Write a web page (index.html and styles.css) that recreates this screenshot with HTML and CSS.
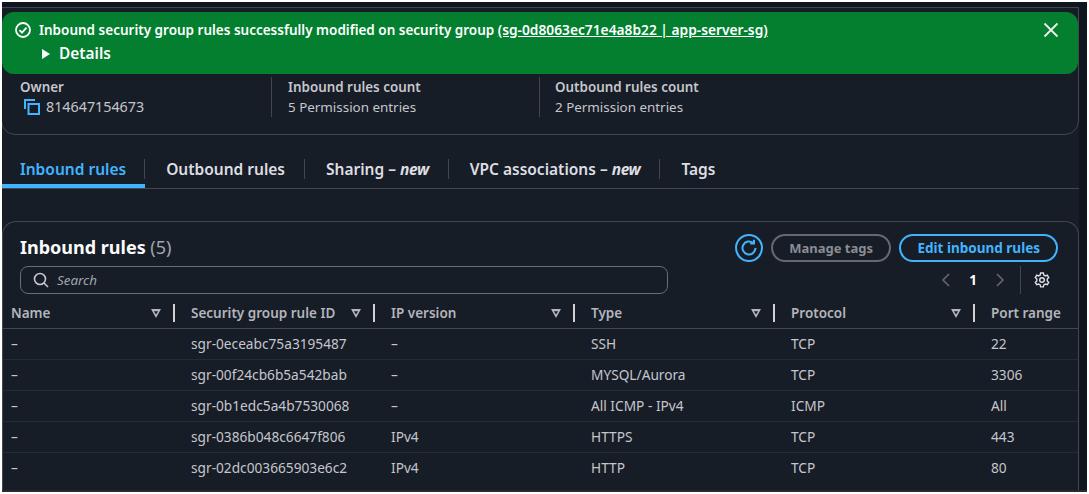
FILE: index.html
```html
<!DOCTYPE html>
<html lang="en">
<head>
    <meta charset="UTF-8">
    <title>Inbound rules</title>
    <link rel="stylesheet" href="styles.css">
</head>
<body>
    <div class="page">
        <div class="flash">
            <svg class="flash-icon" width="16" height="16" viewBox="0 0 16 16"><circle cx="8" cy="8" r="7"/><path d="M4.500 8.200 7 10.700l4.500-5"/></svg>
            <div class="flash-text">
                <div>Inbound security group rules successfully modified on security group <a href="#">(sg-0d8063ec71e4a8b22 | app-server-sg)</a></div>
                <div class="details"><span class="caret"></span>Details</div>
            </div>
            <svg class="flash-close" width="16" height="16" viewBox="0 0 16 16"><path d="M1.500 1.500l13 13M14.500 1.500l-13 13"/></svg>
        </div>

        <div class="main">
            <div class="summary">
                <div class="summary-col first">
                    <div class="label">Owner</div>
                    <div class="value"><svg class="copy" width="16" height="16" viewBox="0 0 16 16"><path d="M1 10V1h10"/><rect x="4.500" y="5" width="10.500" height="10"/></svg>814647154673</div>
                </div>
                <div class="summary-col">
                    <div class="label">Inbound rules count</div>
                    <div class="value">5 Permission entries</div>
                </div>
                <div class="summary-col">
                    <div class="label">Outbound rules count</div>
                    <div class="value">2 Permission entries</div>
                </div>
            </div>

            <div class="tabs">
                <div class="tab active">Inbound rules</div>
                <div class="tab">Outbound rules</div>
                <div class="tab">Sharing – <em>new</em></div>
                <div class="tab">VPC associations – <em>new</em></div>
                <div class="tab">Tags</div>
            </div>

            <div class="card">
                <div class="card-head">
                    <div class="card-left">
                        <h2>Inbound rules <span>(5)</span></h2>
                        <div class="search">
                            <svg width="16" height="16" viewBox="0 0 16 16"><circle cx="7" cy="7" r="5.500"/><path d="M11 11l4 4"/></svg>
                            <span>Search</span>
                        </div>
                    </div>
                    <div class="card-right">
                        <div class="actions">
                            <div class="refresh"><svg width="18" height="18" viewBox="0 0 18 18"><path d="M15.500 9a6.500 6.500 0 1 1-2.200-4.900"/><path d="M14 0.800v3.800h-3.800"/></svg></div>
                            <div class="btn off">Manage tags</div>
                            <div class="btn primary">Edit inbound rules</div>
                        </div>
                        <div class="pager">
                            <svg width="10" height="14" viewBox="0 0 10 14"><path d="M8 1 2 7l6 6"/></svg>
                            <b>1</b>
                            <svg width="10" height="14" viewBox="0 0 10 14"><path d="M2 1l6 6-6 6"/></svg>
                            <i></i>
                            <svg class="gear" width="16" height="16" viewBox="0 0 16 16"><path d="M6.600 1h2.800l.4 2 1.600.9 1.900-.7 1.400 2.400-1.500 1.400v1.900l1.500 1.400-1.400 2.400-1.900-.7-1.600.9-.4 2H6.600l-.4-2-1.600-.9-1.900.7L1.300 10.300l1.500-1.400V7L1.300 5.600l1.400-2.400 1.900.7 1.600-.9z"/><circle cx="8" cy="8" r="2.300"/></svg>
                        </div>
                    </div>
                </div>

                <table>
                    <thead>
                        <tr>
                            <th class="c-name">Name<span class="sort"></span></th>
                            <th class="c-id">Security group rule ID<span class="sort"></span></th>
                            <th class="c-ip">IP version<span class="sort"></span></th>
                            <th class="c-type">Type<span class="sort"></span></th>
                            <th class="c-proto">Protocol<span class="sort"></span></th>
                            <th class="c-port">Port range</th>
                        </tr>
                    </thead>
                    <tbody>
                        <tr><td>–</td><td>sgr-0eceabc75a3195487</td><td>–</td><td>SSH</td><td>TCP</td><td>22</td></tr>
                        <tr><td>–</td><td>sgr-00f24cb6b5a542bab</td><td>–</td><td>MYSQL/Aurora</td><td>TCP</td><td>3306</td></tr>
                        <tr><td>–</td><td>sgr-0b1edc5a4b7530068</td><td>–</td><td>All ICMP - IPv4</td><td>ICMP</td><td>All</td></tr>
                        <tr><td>–</td><td>sgr-0386b048c6647f806</td><td>IPv4</td><td>HTTPS</td><td>TCP</td><td>443</td></tr>
                        <tr><td>–</td><td>sgr-02dc003665903e6c2</td><td>IPv4</td><td>HTTP</td><td>TCP</td><td>80</td></tr>
                    </tbody>
                </table>
            </div>
        </div>
    </div>
</body>
</html>
```

FILE: styles.css
```css
* { box-sizing: border-box; }
html, body { margin: 0; height: 100%; overflow: hidden; }
body { background: white; font-family: "Noto Sans", sans-serif; font-size: 13.400px; color: #c6c6cd; }
svg { fill: none; stroke: currentColor; stroke-width: 1.600; display: block; flex: none; }

.page { position: relative; height: 490px; margin: 2px 2px 0 2px; padding-top: 5px; background: #10161e; border-bottom: 2px solid #2b2b2b; overflow: hidden; }
.main { width: 1077px; height: 483px; background: #161d26; }

.flash { position: absolute; top: 10px; left: 0; width: 1076px; height: 62px; background: #037f2f; border-radius: 12px; color: white; display: flex; padding: 9px 0 0 13px; font-weight: 600; font-size: 13.500px; line-height: 18px; }
.flash-icon { margin: 1px 8px 0 0; stroke-width: 1.800; }
.flash-text { flex: 1; }
.flash-text a { color: white; text-decoration: underline; font-size: 13.750px; }
.details { font-size: 15.400px; margin-top: 6px; display: flex; align-items: center; }
.caret { width: 0; height: 0; border-left: 8px solid white; border-top: 5px solid transparent; border-bottom: 5px solid transparent; margin: 0 9px 0 3px; }
.flash-close { margin: 1px 19px 0 0; stroke-width: 1.800; color: #f0f0f0; }

.summary { height: 128px; border: 1px solid #424650; border-radius: 0 0 14px 14px; margin-left: -1px; width: 1078px; padding: 69px 0 0 0; display: flex; }
.summary-col { width: 268px; height: 40px; padding: 1px 0 0 16px; border-left: 1px solid #424650; }
.summary-col:last-child { padding-left: 15px; }
.summary-col.first { width: 269px; border-left: none; padding-left: 18px; }
.label { font-weight: 600; line-height: 18px; }
.value { line-height: 20px; margin-top: 1px; display: flex; gap: 6px; align-items: center; }
.first .value { margin-left: 4px; font-size: 14.300px; }
.copy { color: #42b4ff; stroke-width: 2; }

.tabs { display: flex; height: 54px; padding-top: 24px; border-bottom: 1px solid #424650; }
.tab { height: 29px; padding: 0 20px 0 21px; font-size: 15.500px; font-weight: 600; color: #dedee3; position: relative; line-height: 20px; }
.tab:not(:last-child)::after { content: ""; position: absolute; right: 0; top: 0; width: 1px; height: 20px; background: #424650; }
.tab em { font-weight: 700; letter-spacing: -0.400px; }
.tab.active { color: #42b4ff; padding: 0 19px 0 18px; }
.tab.active::before { content: ""; position: absolute; left: 0; right: 0; bottom: 0; height: 4px; background: #42b4ff; }

.card { margin-top: 32px; height: 270px; border: 1px solid #424650; border-bottom: none; border-radius: 14px 14px 0 0; }
.card-head { display: flex; justify-content: space-between; padding: 12px 20px 0 17px; height: 74px; }
h2 { margin: 1px 0 0; font-size: 18px; font-weight: 700; line-height: 24px; color: #fbfbfb; }
h2 span { font-weight: 400; color: #a4a4ad; }
.search { width: 648px; height: 28px; margin-top: 7px; border: 1px solid #686e78; border-radius: 8px; display: flex; align-items: center; gap: 8px; padding-left: 12px; color: #c6c6cd; }
.search span { font-style: italic; font-size: 13.400px; color: #a4a4ad; }
.card-right { display: flex; flex-direction: column; align-items: flex-end; }
.actions { display: flex; align-items: center; gap: 8px; height: 28px; }
.refresh { width: 28px; height: 28px; border: 2px solid #42b4ff; border-radius: 50%; color: #42b4ff; display: flex; align-items: center; justify-content: center; }
.refresh svg { stroke-width: 2; }
.btn { height: 28px; border: 2px solid; border-radius: 14px; font-weight: 700; font-size: 13.500px; line-height: 24px; padding: 0 16px; }
.btn.off { border-color: #656871; color: #8c8c94; font-size: 13px; padding: 0 16.500px; }
.btn.primary { border-color: #42b4ff; color: #42b4ff; }
.pager { display: flex; align-items: center; height: 28px; margin-top: 4px; color: #656871; }
.pager b { color: white; font-size: 13.400px; margin: 0 18px 0 18px; }
.pager i { width: 1px; height: 28px; background: #424650; margin: 0 13px 0 15px; }
.gear { color: #dedee3; margin-right: 8px; stroke-width: 1.400; }

table { border-collapse: collapse; table-layout: fixed; width: 100%; }
th { height: 32px; padding: 3px 0 0 16px; text-align: left; font-weight: 600; font-size: 13.500px; color: #b4b4bb; position: relative; border-bottom: 1px solid #424650; }
th:first-child, td:first-child { padding-left: 8px; }
th:not(:last-child)::after { content: ""; position: absolute; right: 0; top: 8px; width: 2px; height: 18px; background: #d0d0d5; }
.sort { position: absolute; right: 14px; top: 13px; width: 10px; height: 9px; background: #b4b4bb; clip-path: polygon(0 0, 100% 0, 50% 100%, 0 0, 30% 24%, 50% 62%, 70% 24%, 30% 24%); }
.c-name { width: 172px; }
.c-id { width: 200px; }
.c-ip { width: 200px; }
.c-type { width: 200px; }
.c-proto { width: 200px; }
td { height: 31px; padding: 0 0 0 16px; border-bottom: 1px solid #232b37; font-size: 13.700px; color: #c6c6cd; }
tr:last-child td { border-bottom: none; }
```
